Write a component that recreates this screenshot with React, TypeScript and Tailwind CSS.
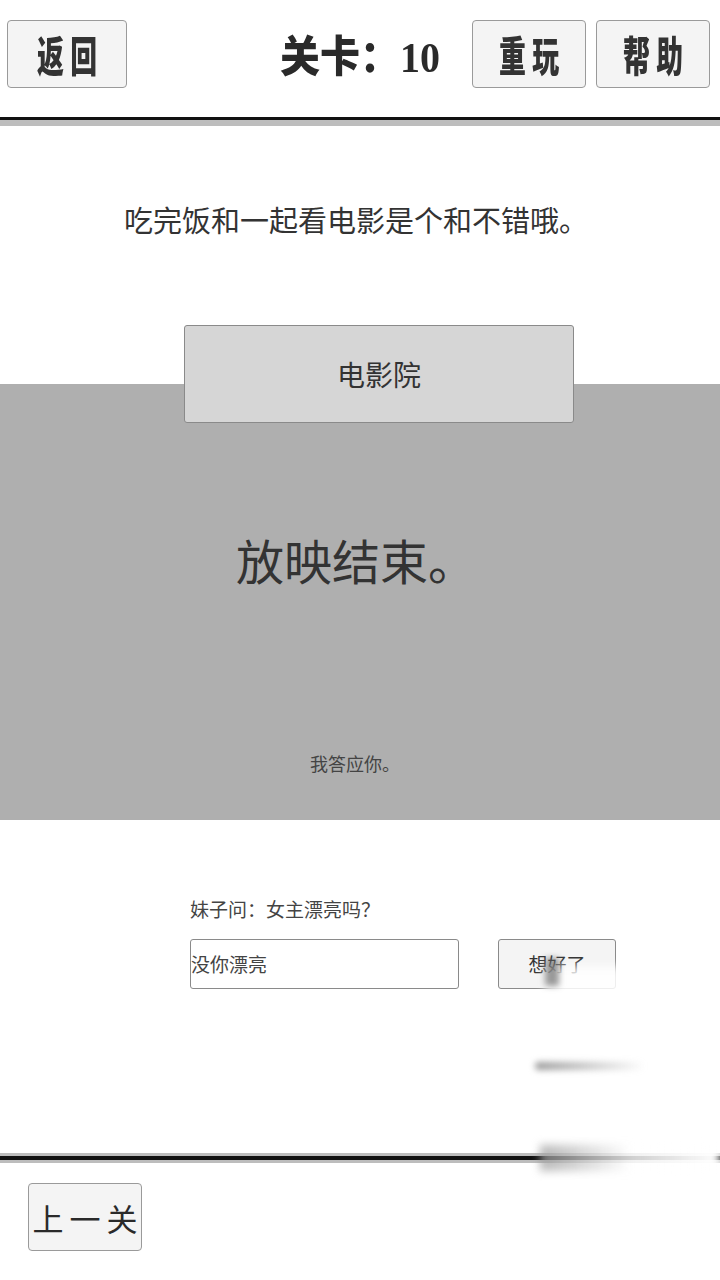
import React from "react";

const cjk = { fontFamily: '"Noto Sans CJK SC", "Noto Sans", sans-serif' };

function HeadBtn({ label, w }: { label: string; w: string }) {
  return (
    <div
      className={`${w} h-[68px] flex items-center justify-center bg-[#f4f4f4] border border-[#9a9a9a] rounded-[4px]`}
    >
      <span
        className="text-[42px] font-black text-[#333] tracking-[10px] pl-[10px] scale-x-[0.64] inline-block leading-none whitespace-nowrap"
        style={cjk}
      >
        {label}
      </span>
    </div>
  );
}

export default function App() {
  return (
    <div className="w-[720px] h-[1280px] bg-white relative overflow-hidden" style={cjk}>
      {/* header */}
      <div className="h-[117px] flex items-start pt-[20px] px-[7px]">
        <HeadBtn label="返回" w="w-[120px]" />
        <div className="flex-1 flex justify-end pr-[32px] pt-[12px]">
          <span className="text-[43px] font-black text-[#2a2a2a] leading-none inline-block scale-x-[0.93] origin-right whitespace-nowrap">
            关卡：<span style={{ fontFamily: '"Liberation Serif", serif' }} className="font-bold">10</span>
          </span>
        </div>
        <div className="flex gap-[10px] pr-[3px]">
          <HeadBtn label="重玩" w="w-[114px]" />
          <HeadBtn label="帮助" w="w-[114px]" />
        </div>
      </div>
      <div className="h-[3px] bg-[#111]" />
      <div className="h-[6px] bg-[#bdbdbd]" />

      {/* content */}
      <div className="h-[74px]" />
      <div className="text-center text-[29px] text-[#333] leading-[38px] mr-[8px]">
        吃完饭和一起看电影是个和不错哦。
      </div>
      <div className="h-[87px]" />
      <div className="relative">
        <div className="absolute top-[59px] left-0 right-0 h-[436px] bg-[#afafaf]" />
        <div className="relative flex">
          <div className="ml-[184px] w-[390px] h-[98px] bg-[#d6d6d6] border border-[#8a8a8a] rounded-[3px] flex items-center justify-center text-[28px] text-[#333]">
            电影院
          </div>
        </div>
        <div className="relative h-[397px] flex flex-col items-center">
          <div className="mt-[112px] text-[48px] text-[#333] leading-none mr-[8px]">放映结束。</div>
          <div className="mt-[171px] text-[18px] text-[#444] leading-none mr-[10px]">我答应你。</div>
        </div>
      </div>

      <div className="h-[79px]" />
      <div className="pl-[190px]">
        <div className="text-[19px] text-[#444] leading-none whitespace-nowrap">妹子问：女主漂亮吗？</div>
        <div className="flex mt-[21px] items-center">
          <div className="w-[269px] h-[50px] border border-[#8a8a8a] rounded-[3px] flex items-center text-[19px] text-[#444]">
            没你漂亮
          </div>
          <div className="ml-[39px] w-[118px] h-[50px] bg-[#f4f4f4] border border-[#8a8a8a] rounded-[3px] flex items-center justify-center text-[19px] text-[#333]">
            想好了
          </div>
        </div>
      </div>

      {/* smudge overlay */}
      <div className="absolute left-[545px] top-[966px] w-[85px] h-[60px] bg-white/85 blur-[5px]" />
      <div className="absolute left-[545px] top-[958px] w-[14px] h-[28px] bg-[#555]/60 blur-[3px]" />
      <div className="absolute left-[535px] top-[1062px] w-[110px] h-[8px] rounded-full bg-gradient-to-r from-[#999] to-transparent blur-[3px]" />

      {/* bottom bar */}
      <div className="absolute top-[1153px] left-0 right-0">
        <div className="h-[3px] bg-[#bdbdbd]" />
        <div className="h-[4px] bg-[#111]" />
        <div className="h-[3px] bg-[#bdbdbd]" />
      </div>
      <div className="absolute top-[1145px] left-[540px] w-[180px] h-[26px] bg-gradient-to-r from-[#999]/70 via-white/80 to-white blur-[4px]" />
      <div className="absolute top-[1183px] left-[28px] w-[114px] h-[68px] bg-[#f4f4f4] border border-[#9a9a9a] rounded-[4px] flex items-center justify-center">
        <span className="text-[31px] text-[#2a2a2a] tracking-[6px] pl-[6px] leading-none whitespace-nowrap">上一关</span>
      </div>
    </div>
  );
}
